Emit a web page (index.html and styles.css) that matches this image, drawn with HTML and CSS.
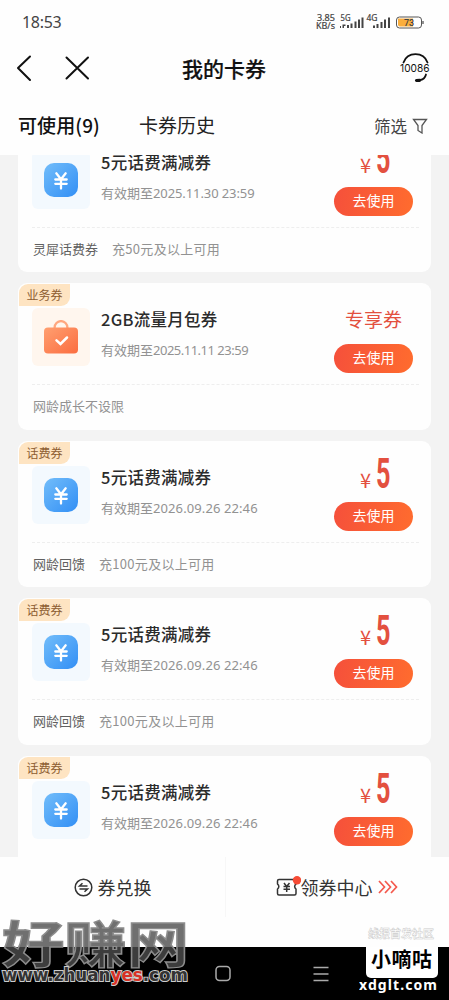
FILE: index.html
```html
<!DOCTYPE html>
<html lang="zh-CN">
<head>
<meta charset="utf-8">
<title>我的卡券</title>
<link rel="stylesheet" href="styles.css">
</head>
<body>
<svg class="defs" width="0" height="0">
  <defs>
    <linearGradient id="blue" x1="0" y1="0" x2="1" y2="1"><stop offset="0" stop-color="#72bdfa"/><stop offset="1" stop-color="#328ff5"/></linearGradient>
    <linearGradient id="orange" x1="0" y1="0" x2="1" y2="1"><stop offset="0" stop-color="#ff9f70"/><stop offset="1" stop-color="#fb6d40"/></linearGradient>
    <symbol id="yen" viewBox="0 0 34 34">
      <rect width="34" height="34" rx="10" fill="url(#blue)"/>
      <path d="M12.3 10.3l4.7 6 4.7-6M17 16.3v9.2M11.3 16.5h11.4M11.3 20.8h11.4" fill="none" stroke="#fff" stroke-width="2.3" stroke-linecap="round"/>
    </symbol>
    <symbol id="bag" viewBox="0 0 34 34">
      <path d="M10.6 9V7.500a6.400 6.400 0 0 1 12.800 0V9" fill="none" stroke="#ffa77f" stroke-width="2.300"/>
      <rect y="7.500" width="34" height="26" rx="4" fill="url(#orange)"/>
      <path d="M12.500 20.300l4 3.700 6.500-6.500" fill="none" stroke="#fff" stroke-width="2.500" stroke-linecap="round"/>
    </symbol>
  </defs>
</svg>
<main class="phone">
  <header class="status">
    <span class="time">18:53</span>
    <svg class="indicators" width="112" height="20" viewBox="0 0 112 20">
      <g fill="#444">
        <text class="ind" x="1" y="8" textLength="18" lengthAdjust="spacingAndGlyphs">3.85</text>
        <text class="ind" x="0" y="15.500" textLength="19" lengthAdjust="spacingAndGlyphs">KB/s</text>
        <text class="net" x="24.500" y="8" textLength="10" lengthAdjust="spacingAndGlyphs">5G</text>
        <text class="net" x="50.500" y="8" textLength="11" lengthAdjust="spacingAndGlyphs">4G</text>
        <path d="M24 13h1v2h-1zM26.500 11.500h3v1.500h-1.500v2h-1.500zM31 12h2v3h-2zM34.500 10.500h2v4.500h-2zM38.500 8.500h2v6.500h-2zM42 6.500h2v8.500h-2zM45.500 4.500h2v10.500h-2zM57 12.500h2v2.500h-2zM60.500 11h2v4h-2zM64.500 9h2v6h-2zM68 6.500h2v8.500h-2zM72 4.500h2v10.500h-2z"/>
      </g>
      <rect x="80.500" y="4" width="25" height="11" rx="3" fill="#fff" stroke="#555"/>
      <path d="M82 5.500h15v8H84a2 2 0 0 1-2-2z" fill="#faae3d"/>
      <path d="M107 8v3" stroke="#555" stroke-width="1.300"/>
      <text class="pct" x="88" y="12.800" textLength="10">73</text>
    </svg>
  </header>
  <nav class="titlebar">
    <svg class="nav-icons" width="80" height="30" viewBox="0 0 80 30" fill="none" stroke="#111" stroke-width="2" stroke-linecap="round" stroke-linejoin="round"><path d="M16 3.500L4 15l12 12M52.500 4.500l21.500 21M74 4.500l-21.500 21"/></svg>
    <h1>我的卡券</h1>
    <svg class="service" width="32" height="32" viewBox="0 0 32 32" fill="none" stroke="#111" stroke-width="1.800" stroke-linecap="round">
      <path d="M4.500 10.500C8.500-.6 24.500-.6 28.500 10.500M27 22.500c-.8 3-3 5-5.500 5.500"/><path d="M17.500 28.500l3-.2" stroke-width="3.200"/>
      <text class="hotline" x="1" y="20.200" textLength="29.500" lengthAdjust="spacingAndGlyphs">10086</text>
    </svg>
  </nav>
  <div class="tabs">
    <span class="tab active">可使用(9)</span>
    <span class="tab history">卡券历史</span>
    <span class="filter">筛选</span>
    <svg width="16" height="16" viewBox="0 0 16 16" fill="none" stroke="#555" stroke-width="1.300"><path d="M1.500 1.500h13L10 7.500V15l-4-2.500v-5z"/></svg>
  </div>
  <section class="list">
    <article class="card">
      <span class="tag">话费券</span>
      <div class="top">
        <div class="thumb"><svg width="34" height="34"><use href="#yen"/></svg></div>
        <div class="info"><h2>5元话费满减券</h2><p>有效期至<i>2025.11.30 23:59</i></p></div>
        <div class="side"><div class="price"><small>¥</small><b>5</b></div><button>去使用</button></div>
      </div>
      <div class="foot"><span class="source">灵犀话费券</span><span class="rule">充50元及以上可用</span></div>
    </article>
    <article class="card">
      <span class="tag">业务券</span>
      <div class="top">
        <div class="thumb warm"><svg width="34" height="34"><use href="#bag"/></svg></div>
        <div class="info"><h2>2GB流量月包券</h2><p>有效期至<i class="narrow">2025.11.11 23:59</i></p></div>
        <div class="side"><div class="special">专享券</div><button>去使用</button></div>
      </div>
      <div class="foot"><span>网龄成长不设限</span></div>
    </article>
    <article class="card">
      <span class="tag">话费券</span>
      <div class="top">
        <div class="thumb"><svg width="34" height="34"><use href="#yen"/></svg></div>
        <div class="info"><h2>5元话费满减券</h2><p>有效期至<i class="wide">2026.09.26 22:46</i></p></div>
        <div class="side"><div class="price"><small>¥</small><b>5</b></div><button>去使用</button></div>
      </div>
      <div class="foot"><span class="source">网龄回馈</span><span class="rule">充100元及以上可用</span></div>
    </article>
    <article class="card">
      <span class="tag">话费券</span>
      <div class="top">
        <div class="thumb"><svg width="34" height="34"><use href="#yen"/></svg></div>
        <div class="info"><h2>5元话费满减券</h2><p>有效期至<i class="wide">2026.09.26 22:46</i></p></div>
        <div class="side"><div class="price"><small>¥</small><b>5</b></div><button>去使用</button></div>
      </div>
      <div class="foot"><span class="source">网龄回馈</span><span class="rule">充100元及以上可用</span></div>
    </article>
    <article class="card">
      <span class="tag">话费券</span>
      <div class="top">
        <div class="thumb"><svg width="34" height="34"><use href="#yen"/></svg></div>
        <div class="info"><h2>5元话费满减券</h2><p>有效期至<i class="wide">2026.09.26 22:46</i></p></div>
        <div class="side"><div class="price"><small>¥</small><b>5</b></div><button>去使用</button></div>
      </div>
    </article>
  </section>
  <footer class="actions">
    <div class="action">
      <svg width="19" height="19" viewBox="0 0 19 19" fill="none" stroke="#333" stroke-width="1.500"><circle cx="9.500" cy="9.500" r="8.300"/><path d="M13.500 8H5.500l3-2.800M5.500 11h8l-3 2.800"/></svg>
      <span>券兑换</span>
    </div>
    <div class="action center">
      <svg width="25" height="22" viewBox="0 0 25 22" fill="none" stroke="#333" stroke-width="1.500" stroke-linejoin="round"><path d="M3 3.500h15.500a1.500 1.500 0 0 1 1.500 1.500v3a3 3 0 0 0 0 5v4.500a1.500 1.500 0 0 1-1.500 1.500H3A1.500 1.500 0 0 1 1.500 17.500V13a3 3 0 0 0 0-5V5A1.500 1.500 0 0 1 3 3.500z"/><path d="M8 7l2.700 3.500L13.500 7M10.700 10.500v5.500M7.500 10.500h6.500M7.500 13.200h6.500"/><circle cx="21" cy="4.200" r="4.200" fill="#f64b35" stroke="none"/></svg>
      <span>领券中心</span>
      <svg class="arrows" width="20" height="14" viewBox="0 0 20 14" fill="none" stroke="#f4594d" stroke-width="1.700"><path d="M1 1l5.500 6L1 13M7 1l5.500 6L7 13M13 1l5.500 6-5.500 6"/></svg>
    </div>
  </footer>
  <div class="system">
    <svg width="449" height="53" viewBox="0 0 449 53" fill="none" stroke="#aaa" stroke-width="1.500"><rect x="216" y="19.500" width="14" height="14" rx="3.500"/><path d="M313.500 20.500h15M313.500 27h15M313.500 33.500h15"/></svg>
  </div>
  <svg class="mark mark-left" width="195" height="75" viewBox="0 0 195 75">
    <text class="mark-title" x="2" y="45" textLength="187" lengthAdjust="spacingAndGlyphs">好赚网</text>
    <text class="mark-url" x="2" y="63" textLength="186" lengthAdjust="spacingAndGlyphs">www.zhuan<tspan class="red">yes</tspan>.com</text>
  </svg>
  <svg class="mark mark-right" width="90" height="75" viewBox="0 0 90 75">
    <text class="mark-small" x="9" y="12.500" textLength="66">线报首发社区</text>
    <path d="M7 22h72v26a5 5 0 0 1-5 5H12a5 5 0 0 1-5-5z" fill="#fff"/>
    <text class="mark-name" x="12" y="42" textLength="61">小嘀咕</text>
    <text class="mark-site" x="0" y="65" textLength="78">xdglt.com</text>
  </svg>
</main>
</body>
</html>
```

FILE: styles.css
```css
* { box-sizing: border-box; }
body {
  margin: 0;
  background: #f3f3f3;
  font-family: "Noto Sans CJK SC", sans-serif;
  color: #222;
}
.defs { position: absolute; }
.phone {
  position: relative;
  display: flex;
  flex-direction: column;
  width: 449px;
  height: 1000px;
  overflow: hidden;
}
.status {
  display: flex;
  justify-content: space-between;
  align-items: center;
  height: 44px;
  padding: 0 22px;
  background: #fefefe;
}
.time { font: 16px/20px "Noto Sans", sans-serif; color: #444; letter-spacing: -0.300px; }
.ind { font: 8px "Noto Sans", sans-serif; stroke: #444; stroke-width: 0.200; }
.net { font: 8.500px "Noto Sans", sans-serif; stroke: #444; stroke-width: 0.200; }
.pct { font: 500 9px Roboto, sans-serif; fill: #444; }
.indicators { margin: 1px -1px 0 0; }
.titlebar {
  display: flex;
  justify-content: space-between;
  align-items: center;
  height: 50px;
  padding: 0 18px 2px 14px;
  background: #fefefe;
}
h1 { margin: 0 45px 0 0; font-size: 21px; font-weight: 500; line-height: 30px; color: #111; -webkit-text-stroke: 0.200px #111; }
.hotline { font: 11px Inter, sans-serif; fill: #111; stroke: none; }
.tabs {
  display: flex;
  align-items: center;
  height: 61px;
  padding: 2px 21px 0 18px;
  background: #fefefe;
}
.tab { margin-bottom: 2px; font-size: 19px; line-height: 28px; }
.active { width: 121px; font-weight: 500; color: #111; letter-spacing: 0.100px; }
.history { flex: 1; }
.filter { margin-right: 5px; font-size: 16.500px; line-height: 24px; color: #444; }
.list {
  display: flex;
  flex-direction: column;
  gap: 11px;
  height: 702px;
  margin: 0 18px;
  overflow: hidden;
}
.card {
  position: relative;
  flex: none;
  height: 146.400px;
  padding: 0 12px 0 14px;
  border-radius: 9px;
  background: #fefefe;
}
.card:first-child { margin-top: -29px; }
.tag {
  position: absolute;
  left: 1px;
  top: 1px;
  width: 51px;
  height: 22px;
  border-radius: 9px 0 9px 0;
  background: #fee4c2;
  color: #8d5d31;
  font-size: 12px;
  line-height: 21px;
  text-align: center;
}
.top {
  display: flex;
  height: 102px;
  padding-top: 25px;
  border-bottom: 1px dashed #eee;
}
.thumb {
  display: flex;
  align-items: center;
  justify-content: center;
  width: 58px;
  height: 58px;
  border-radius: 6px;
  background: #f3f9fe;
}
.warm { background: #fff6ee; }
.info { flex: 1; padding-left: 11px; white-space: nowrap; }
h2 { margin: -1px 0 0; font-size: 16.500px; font-weight: 500; line-height: 24px; color: #2b2b2b; letter-spacing: 0.250px; }
.info p { margin: 9px 0 0; font-size: 13px; line-height: 20px; color: #929292; }
.info i { font-family: "Noto Sans", sans-serif; font-style: normal; letter-spacing: -0.100px; }
.info i.narrow { letter-spacing: -0.500px; }
.info i.wide { letter-spacing: 0.100px; }
.side { width: 86px; margin: -11px -1px 0 0; }
.price {
  display: flex;
  align-items: baseline;
  height: 47px;
  padding-left: 26px;
  color: #e3503f;
}
.price small { width: 16px; font-size: 20px; line-height: 24px; }
.price b { width: 15px; font: bold 42px/37px Roboto, sans-serif; transform: scaleX(0.600); transform-origin: left; }
.special { width: 79px; height: 47px; font-size: 19px; line-height: 43px; text-align: center; color: #e3503f; }
button {
  display: block;
  width: 79px;
  height: 29px;
  padding: 0 0 3px;
  border: 0;
  border-radius: 15px;
  background: linear-gradient(100deg, #f5503b, #ff6c2e);
  color: #fff;
  font: 14px/26px "Noto Sans CJK SC", sans-serif;
}
.foot {
  display: flex;
  gap: 14px;
  padding: 11px 0 0 1px;
  font-size: 13px;
  line-height: 20px;
  color: #929292;
}
.source { color: #606060; }
.rule { letter-spacing: 0.300px; }
.actions {
  display: flex;
  height: 90px;
  background: #fefefe;
}
.action {
  display: flex;
  align-items: center;
  justify-content: center;
  gap: 5px;
  width: 225px;
  height: 60px;
  font-size: 18px;
  color: #333;
}
.action + .action { border-left: 1px solid #f7f7f7; }
.action span { margin-bottom: 1px; }
.center { gap: 0; width: 224px; padding-right: 2px; }
.arrows { margin-left: 5px; }
.system { height: 53px; background: #000; }
.mark { position: absolute; }
.mark-left { left: 0; top: 918px; }
.mark-right { left: 359px; top: 925px; }
.mark-title {
  font: bold 50px "Noto Sans CJK SC", sans-serif;
  fill: #4c4c4c;
  fill-opacity: 0.800;
  stroke: #8c8c8c;
  stroke-width: 1.300;
}
.mark-url {
  font: bold 17px "DejaVu Sans", sans-serif;
  fill: #333;
  stroke: #ccc;
  stroke-width: 2;
  paint-order: stroke;
}
.red { fill: #d83126; }
.mark-small { font: bold 11px "Noto Sans CJK SC", sans-serif; fill: #fff; stroke: #ccc; stroke-width: 0.500; }
.mark-name { font: bold 20px "Noto Sans CJK SC", sans-serif; fill: #000; }
.mark-site { font: bold 14px "Noto Sans", sans-serif; fill: #fff; }
```
